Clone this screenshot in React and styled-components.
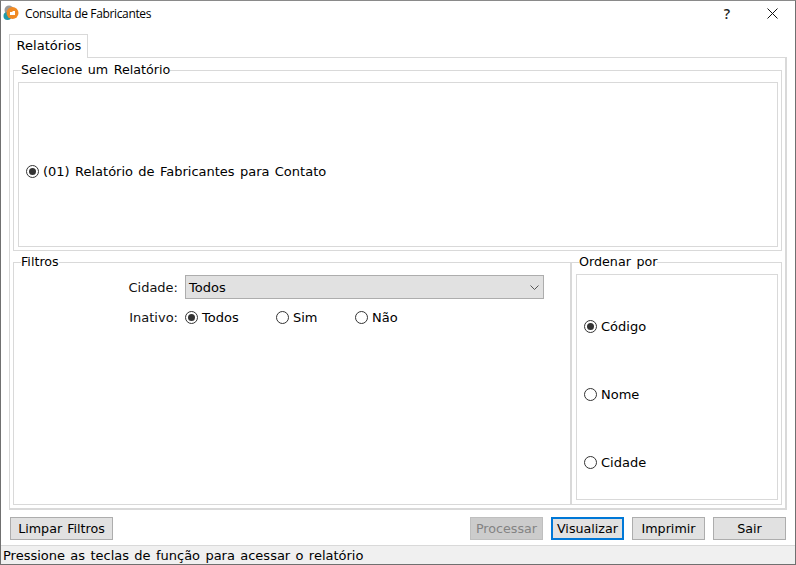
import { createGlobalStyle } from 'styled-components'
import styled from 'styled-components'

const Global = createGlobalStyle`
  html, body { margin: 0; padding: 0; background: #fff; }
  * { box-sizing: border-box; }
  body { font-family: "DejaVu Sans", Verdana, sans-serif; font-size: 13px; word-spacing: 1.2px; color: #000; }
`

const Win = styled.div`
  width: 796px;
  height: 565px;
  border: 1px solid #707070;
  border-top-color: #8a8a8a;
  background: #fff;
  display: flex;
  flex-direction: column;
  overflow: hidden;
`

const TitleBar = styled.div`
  height: 33px;
  flex-shrink: 0;
  display: flex;
  align-items: flex-start;
  padding: 4px 0 0 2px;
`

const Title = styled.span`
  font-family: "Open Sans", "Noto Sans", sans-serif;
  font-size: 12px;
  word-spacing: 0;
  line-height: 17px;
  margin-left: 6px;
  letter-spacing: -0.35px;
  flex: 1;
`

const Help = styled.span`
  font-family: "Open Sans", sans-serif;
  font-size: 14px;
  font-weight: 600;
  line-height: 17px;
  width: 46px;
  padding-left: 2px;
  text-align: center;
  color: #222;
`

const CloseBox = styled.span`
  width: 46px;
  height: 17px;
  display: flex;
  align-items: center;
  justify-content: center;
`

const Body = styled.div`
  padding: 0 8px;
  flex: 1;
  display: flex;
  flex-direction: column;
  min-height: 0;
`

const Tab = styled.div`
  width: 79px;
  height: 24px;
  border: 1px solid #d9d9d9;
  border-bottom: 0;
  background: #fff;
  text-align: center;
  line-height: 21px;
  padding-left: 1px;
  margin-bottom: -1px;
  position: relative;
  z-index: 1;
`

const TabPanel = styled.div`
  height: 453px;
  border: 1px solid #d9d9d9;
  border-right-width: 2px;
  border-bottom-width: 2px;
  padding: 5px 3px 3px 3px;
  display: flex;
  flex-direction: column;
`

const Group = styled.fieldset`
  margin: 0;
  min-width: 0;
  border: 1px solid #d9d9d9;
  padding: 4px 3px 3px 4px;
  display: flex;
`

const ReportGroup = styled(Group)`
  height: 188px;
`

const Legend = styled.legend`
  padding: 0;
  margin-left: ${p => p.$left}px;
  font-size: 12.7px;
  word-spacing: 1.5px;
  line-height: 15px;
  background: #fff;
  position: relative;
  top: -1px;
`

const Inner = styled.div`
  flex: 1;
  border: 1px solid #d9d9d9;
  display: flex;
  flex-direction: column;
  padding-left: 7px;
`

const ReportBox = styled(Inner)`
  height: 165px;
  justify-content: center;
  padding-top: 13px;
`

const Lower = styled.div`
  display: flex;
  height: 250px;
  margin-top: 4px;
`

const FilterGroup = styled(Group)`
  width: 559px;
  flex-shrink: 0;
  display: block;
  border-right-width: 2px;
  padding: 0;
`

const OrderGroup = styled(Group)`
  flex: 1;
  border-left: 0;
  padding: 4px 3px 3px 4px;
`

const OrderBox = styled(Inner)`
  height: 226px;
  justify-content: space-around;
  padding: 17px 0 2px 7px;
`

const Row = styled.div`
  display: flex;
  align-items: center;
  margin-top: ${p => p.$top}px;
`

const Label = styled.span`
  width: 171px;
  text-align: right;
  padding-right: 7px;
  color: #111;
`

const Select = styled.div`
  width: 359px;
  height: 24px;
  background: #e1e1e1;
  border: 1px solid #adadad;
  display: flex;
  align-items: center;
  justify-content: space-between;
  padding: 0 4px 0 3px;
`

const RadioItem = styled.label`
  display: flex;
  align-items: center;
  gap: 4px;
  width: ${p => p.$w ? p.$w + 'px' : 'auto'};
  line-height: 15px;
`

const RadioDot = styled.span`
  width: 13px;
  height: 13px;
  border-radius: 50%;
  border: 1px solid #333;
  background: #fff;
  flex-shrink: 0;
  display: flex;
  align-items: center;
  justify-content: center;
  &::after {
    content: '';
    width: 7px;
    height: 7px;
    border-radius: 50%;
    background: ${p => p.$on ? '#333' : 'transparent'};
  }
`

const Footer = styled.div`
  display: flex;
  align-items: center;
  gap: 8px;
  height: 35px;
  padding: 2px 1px 0 1px;
  flex-shrink: 0;
`

const Btn = styled.button`
  font-family: inherit;
  font-size: 12.7px;
  word-spacing: 1px;
  height: 23px;
  width: ${p => p.$w}px;
  padding: 0;
  margin: 0;
  background: ${p => p.disabled ? '#cccccc' : '#e1e1e1'};
  color: ${p => p.disabled ? '#838383' : '#000'};
  border: ${p => p.$focus ? '2px solid #0078d7' : `1px solid ${p.disabled ? '#bfbfbf' : '#adadad'}`};
`

const Spacer = styled.div`
  flex: 1;
`

const StatusBar = styled.div`
  height: 19px;
  background: #f0f0f0;
  border-top: 1px solid #d9d9d9;
  padding-left: 2px;
  line-height: 20px;
  flex-shrink: 0;
`

const Logo = () => (
  <svg width="16" height="16" viewBox="0 0 16 16">
    <circle cx="6" cy="5" r="4.5" fill="#9a9a9a" />
    <circle cx="4.5" cy="11" r="4" fill="#1f9aa8" />
    <circle cx="9.5" cy="8" r="6" fill="#f08a24" />
    <path d="M7 10V7h2l1-1h2v4z" fill="#fff" />
  </svg>
)

const CloseIcon = () => (
  <svg width="11" height="11" viewBox="0 0 11 11">
    <path d="M0.5 0.5L10.5 10.5M10.5 0.5L0.5 10.5" stroke="#111" strokeWidth="1" fill="none" />
  </svg>
)

const Chevron = () => (
  <svg width="9" height="5" viewBox="0 0 9 5">
    <path d="M0.5 0.5L4.5 4.5L8.5 0.5" stroke="#555" strokeWidth="1" fill="none" />
  </svg>
)

const Radio = ({ on, w, children }) => (
  <RadioItem $w={w}>
    <RadioDot $on={on} />
    {children}
  </RadioItem>
)

export default function App() {
  return (
    <>
      <Global />
      <Win>
        <TitleBar>
          <Logo />
          <Title>Consulta de Fabricantes</Title>
          <Help>?</Help>
          <CloseBox><CloseIcon /></CloseBox>
        </TitleBar>
        <Body>
          <Tab>Relatórios</Tab>
          <TabPanel>
            <ReportGroup>
              <Legend $left={3}>Selecione um Relatório</Legend>
              <ReportBox>
                <Radio on>(01) Relatório de Fabricantes para Contato</Radio>
              </ReportBox>
            </ReportGroup>
            <Lower>
              <FilterGroup>
                <Legend $left={7}>Filtros</Legend>
                <Row $top={5}>
                  <Label>Cidade:</Label>
                  <Select>Todos<Chevron /></Select>
                </Row>
                <Row $top={11}>
                  <Label>Inativo:</Label>
                  <Radio on w={91}>Todos</Radio>
                  <Radio w={79}>Sim</Radio>
                  <Radio>Não</Radio>
                </Row>
              </FilterGroup>
              <OrderGroup>
                <Legend $left={3}>Ordenar por</Legend>
                <OrderBox>
                  <Radio on>Código</Radio>
                  <Radio>Nome</Radio>
                  <Radio>Cidade</Radio>
                </OrderBox>
              </OrderGroup>
            </Lower>
          </TabPanel>
          <Footer>
            <Btn $w={103}>Limpar Filtros</Btn>
            <Spacer />
            <Btn $w={73} disabled>Processar</Btn>
            <Btn $w={73} $focus>Visualizar</Btn>
            <Btn $w={73}>Imprimir</Btn>
            <Btn $w={73}>Sair</Btn>
          </Footer>
        </Body>
        <StatusBar>Pressione as teclas de função para acessar o relatório</StatusBar>
      </Win>
    </>
  )
}
